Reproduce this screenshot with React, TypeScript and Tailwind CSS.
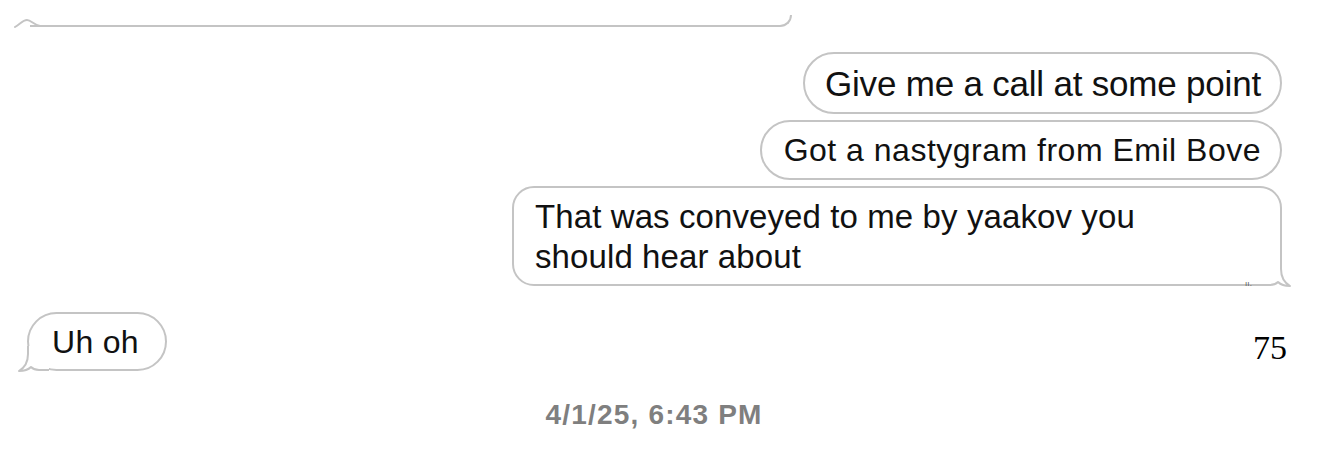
import React from "react";

const BORDER = "#c4c4c4";

function SentTail() {
  return (
    <svg
      className="absolute right-[-12px] bottom-[-3px]"
      width="32"
      height="26"
      viewBox="0 0 32 26"
      fill="none"
    >
      <rect x="0" y="0" width="21" height="26" fill="white" />
      <path
        d="M0 24 L10 24 C14 24 16 23 18 21 C21 24 25 25 30 25 C25 22 21 17 21 8 L21 0"
        stroke={BORDER}
        strokeWidth="2"
        fill="white"
        strokeLinejoin="round"
      />
    </svg>
  );
}

function RecvTail() {
  return (
    <svg
      className="absolute left-[-12px] bottom-[-3px]"
      width="32"
      height="26"
      viewBox="0 0 32 26"
      fill="none"
    >
      <rect x="11" y="0" width="21" height="26" fill="white" />
      <path
        d="M32 24 L22 24 C18 24 16 23 14 21 C11 24 7 25 2 25 C7 22 11 17 11 8 L11 0"
        stroke={BORDER}
        strokeWidth="2"
        fill="white"
        strokeLinejoin="round"
      />
    </svg>
  );
}

export default function App() {
  return (
    <div
      className="w-[1320px] h-[472px] bg-white overflow-hidden flex flex-col text-[#111111]"
      style={{ fontFamily: '"Liberation Sans", Arial, sans-serif' }}
    >
      {/* partial bubble at top */}
      <div className="relative ml-[30px] mt-[15px] w-[762px] h-[12px] border-b-2 border-r-2 border-[#c4c4c4] rounded-br-[16px]">
        <svg
          className="absolute left-[-20px] bottom-[-3px]"
          width="44"
          height="12"
          viewBox="0 0 44 12"
          fill="none"
        >
          <path
            d="M5 11 C10 8 13 4 17 4 C21 4 24 9 30 10 L44 10"
            stroke={BORDER}
            strokeWidth="2"
            fill="none"
            strokeLinecap="round"
          />
        </svg>
      </div>

      {/* sent bubbles */}
      <div className="flex flex-col items-end pr-[38px] mt-[25px] gap-[6px]">
        <div className="h-[62px] flex items-center pl-[20px] pr-[19px] border-2 border-[#c4c4c4] rounded-full text-[35px] leading-none tracking-[-0.2px]">
          Give me a call at some point
        </div>
        <div className="h-[60px] flex items-center pl-[22px] pr-[19px] border-2 border-[#c4c4c4] rounded-full text-[32px] leading-none tracking-[0.5px]">
          Got a nastygram from Emil Bove
        </div>
        <div className="relative w-[770px] h-[100px] pl-[21px] pt-[9px] border-2 border-[#c4c4c4] rounded-[22px] text-[33px] leading-[40px] tracking-[0.1px]">
          <div>That was conveyed to me by yaakov you</div>
          <div>should hear about</div>
          <SentTail />
          <span className="absolute right-[28px] bottom-[-4px] text-[8px] leading-none text-[#555]">
            ıı.
          </span>
        </div>
      </div>

      {/* received row */}
      <div className="flex items-start justify-between mt-[26px] pl-[27px] pr-[33px]">
        <div className="relative h-[59px] flex items-center pl-[23px] pr-[26px] border-2 border-[#c4c4c4] rounded-full text-[32px] leading-none tracking-[0.3px]">
          Uh oh
          <RecvTail />
        </div>
        <div
          className="mt-[19px] text-[34px] leading-none text-black"
          style={{ fontFamily: '"Liberation Serif", "Times New Roman", serif' }}
        >
          75
        </div>
      </div>

      {/* timestamp */}
      <div className="flex justify-center mt-[30px] pr-[12px]">
        <div className="text-[28px] leading-none font-semibold tracking-[1.2px] text-[#7f7f7f]">
          4/1/25, 6:43 PM
        </div>
      </div>
    </div>
  );
}
